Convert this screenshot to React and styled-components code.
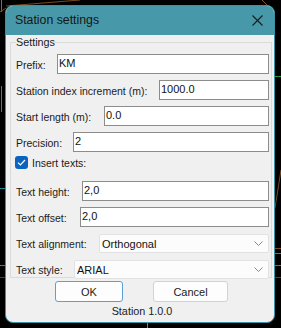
import styled, { createGlobalStyle } from 'styled-components';

const GlobalStyle = createGlobalStyle`
  html, body {
    margin: 0;
    padding: 0;
    background: #000;
  }
  * {
    box-sizing: border-box;
  }
`;

function CadLines() {
  return (
    <Canvas width="281" height="328" viewBox="0 0 281 328">
      <line x1="1.5" y1="0" x2="1.5" y2="12" stroke="#1fa03a" />
      <line x1="6" y1="6" x2="80" y2="0" stroke="#7a4a1c" />
      <line x1="0" y1="12" x2="6" y2="8" stroke="#7a4a1c" />
      <line x1="262" y1="0" x2="268" y2="6" stroke="#8a5a20" />
      <line x1="1.5" y1="86" x2="1.5" y2="112" stroke="#1f8f97" />
      <line x1="0" y1="188.5" x2="5" y2="188.5" stroke="#1f8f97" />
      <line x1="0" y1="265.5" x2="5" y2="265.5" stroke="#1f8f97" />
      <line x1="0" y1="277.5" x2="5" y2="277.5" stroke="#a01818" />
      <line x1="275" y1="76.5" x2="281" y2="76.5" stroke="#1fa03a" />
      <line x1="281" y1="170" x2="275" y2="208" stroke="#7a4a1c" />
      <line x1="275" y1="248.5" x2="281" y2="248.5" stroke="#7a4a1c" />
      <line x1="275" y1="253.5" x2="281" y2="253.5" stroke="#1f8f97" />
      <line x1="275" y1="265.5" x2="281" y2="265.5" stroke="#1f8f97" />
      <line x1="275" y1="277.5" x2="281" y2="277.5" stroke="#a01818" />
      <line x1="147.5" y1="322" x2="147.5" y2="328" stroke="#8a8a20" />
    </Canvas>
  );
}

function CloseIcon() {
  return (
    <svg width="11" height="11" viewBox="0 0 11 11">
      <path d="M0.5 0.5 L10.5 10.5 M10.5 0.5 L0.5 10.5" stroke="#1a1a1a" strokeWidth="1.1" fill="none" />
    </svg>
  );
}

function Chevron() {
  return (
    <ChevronIcon width="9" height="5" viewBox="0 0 9 5">
      <path d="M0.5 0.5 L4.5 4.5 L8.5 0.5" stroke="#8a8a8a" strokeWidth="1" fill="none" />
    </ChevronIcon>
  );
}

function Check() {
  return (
    <svg width="9" height="7" viewBox="0 0 9 7">
      <path d="M1 3.6 L3.4 6 L8 1" stroke="#fff" strokeWidth="1.2" fill="none" />
    </svg>
  );
}

const fields = [
  { label: 'Prefix:', w: 41, value: 'KM' },
  { label: 'Station index increment (m):', w: 143, value: '1000.0' },
  { label: 'Start length (m):', w: 88, value: '0.0' },
  { label: 'Precision:', w: 57, value: '2' },
];

const textFields = [
  { label: 'Text height:', w: 66, value: '2,0' },
  { label: 'Text offset:', w: 64, value: '2,0' },
];

const selects = [
  { label: 'Text alignment:', w: 83, value: 'Orthogonal' },
  { label: 'Text style:', w: 58, value: 'ARIAL' },
];

function App() {
  return (
    <>
      <GlobalStyle />
      <Desktop>
        <CadLines />
        <Window>
          <TitleBar>
            <Title>Station settings</Title>
            <CloseButton>
              <CloseIcon />
            </CloseButton>
          </TitleBar>
          <Body>
            <Group>
              <Legend>Settings</Legend>
              <Rows>
                {fields.map(f => (
                  <Row key={f.label}>
                    <Label $w={f.w}>{f.label}</Label>
                    <TextBox>{f.value}</TextBox>
                  </Row>
                ))}
                <CheckRow>
                  <CheckBox>
                    <Check />
                  </CheckBox>
                  <CheckLabel>Insert texts:</CheckLabel>
                </CheckRow>
                {textFields.map(f => (
                  <Row key={f.label}>
                    <Label $w={f.w}>{f.label}</Label>
                    <TextBox>{f.value}</TextBox>
                  </Row>
                ))}
                {selects.map(f => (
                  <Row key={f.label}>
                    <Label $w={f.w}>{f.label}</Label>
                    <Select>
                      <span>{f.value}</span>
                      <Chevron />
                    </Select>
                  </Row>
                ))}
              </Rows>
            </Group>
            <Buttons>
              <Button $primary $w={68}>OK</Button>
              <Button $w={75}>Cancel</Button>
            </Buttons>
            <Version>Station 1.0.0</Version>
          </Body>
        </Window>
      </Desktop>
    </>
  );
}

export default App;

const Desktop = styled.div`
  position: relative;
  width: 281px;
  height: 328px;
  padding: 5px 6px 5px 5px;
  overflow: hidden;
  background: #000;
  font-family: 'Liberation Sans', Arial, sans-serif;
  color: #1b1b1b;
`;

const Canvas = styled.svg`
  position: absolute;
  left: 0;
  top: 0;
`;

const Window = styled.div`
  position: relative;
  width: 270px;
  height: 318px;
  border: 1px solid #3a93a3;
  border-radius: 8px;
  background: #f0f0f0;
  overflow: hidden;
  display: flex;
  flex-direction: column;
`;

const TitleBar = styled.div`
  height: 29px;
  flex: none;
  background: #4799a9;
  display: flex;
  align-items: center;
  justify-content: space-between;
  padding: 0 0 1px 9px;
`;

const Title = styled.div`
  font-size: 12.3px;
  color: #161616;
`;

const CloseButton = styled.div`
  width: 40px;
  height: 28px;
  display: flex;
  align-items: center;
  justify-content: center;
  margin-right: -3px;
`;

const Body = styled.div`
  flex: 1;
  display: flex;
  flex-direction: column;
  padding: 0 2px 0 4px;
`;

const Group = styled.fieldset`
  margin: 0;
  padding: 0 2px 0 5px;
  border: 1px solid #dadada;
  border-radius: 0;
  height: 243px;
`;

const Legend = styled.legend`
  padding: 0;
  font-size: 10.8px;
  line-height: 14px;
  color: #1b1b1b;
`;

const Rows = styled.div`
  display: flex;
  flex-direction: column;
  gap: 6px;
  padding-top: 5px;
`;

const Row = styled.div`
  display: flex;
  align-items: center;
  height: 20px;
`;

const Label = styled.div`
  width: ${p => p.$w}px;
  flex: none;
  font-size: 10.5px;
  padding-top: 2px;
  white-space: nowrap;
`;

const TextBox = styled.div`
  flex: 1;
  height: 20px;
  background: #fff;
  border: 1px solid #8c8c8c;
  font-size: 11px;
  line-height: 17px;
  padding-left: 1px;
  color: #111;
`;

const Select = styled.div`
  flex: 1;
  height: 19px;
  background: #fcfcfc;
  border: 1px solid #e2e2e2;
  border-radius: 2px;
  display: flex;
  align-items: center;
  justify-content: space-between;
  padding: 1px 5px 0 2px;
  font-size: 11px;
  color: #111;
`;

const ChevronIcon = styled.svg`
  flex: none;
`;

const CheckRow = styled.div`
  display: flex;
  align-items: center;
  gap: 4px;
  height: 13px;
  margin: -2px 0 6px;
`;

const CheckBox = styled.div`
  width: 13px;
  height: 13px;
  border-radius: 3px;
  background: #0a64be;
  display: flex;
  align-items: center;
  justify-content: center;
  margin-left: -1px;
`;

const CheckLabel = styled.div`
  font-size: 10.5px;
  padding-top: 1px;
`;

const Buttons = styled.div`
  display: flex;
  justify-content: center;
  gap: 30px;
  margin-top: 3px;
  padding-left: 1px;
`;

const Button = styled.div`
  width: ${p => p.$w}px;
  height: 21px;
  border: 1px solid ${p => (p.$primary ? '#5a9fd8' : '#d2d2d2')};
  border-radius: 3px;
  background: #fdfdfd;
  display: flex;
  align-items: center;
  justify-content: center;
  font-size: 11px;
  color: #1b1b1b;
`;

const Version = styled.div`
  text-align: center;
  font-size: 10.8px;
  margin-top: 3px;
  padding-left: 2px;
`;
